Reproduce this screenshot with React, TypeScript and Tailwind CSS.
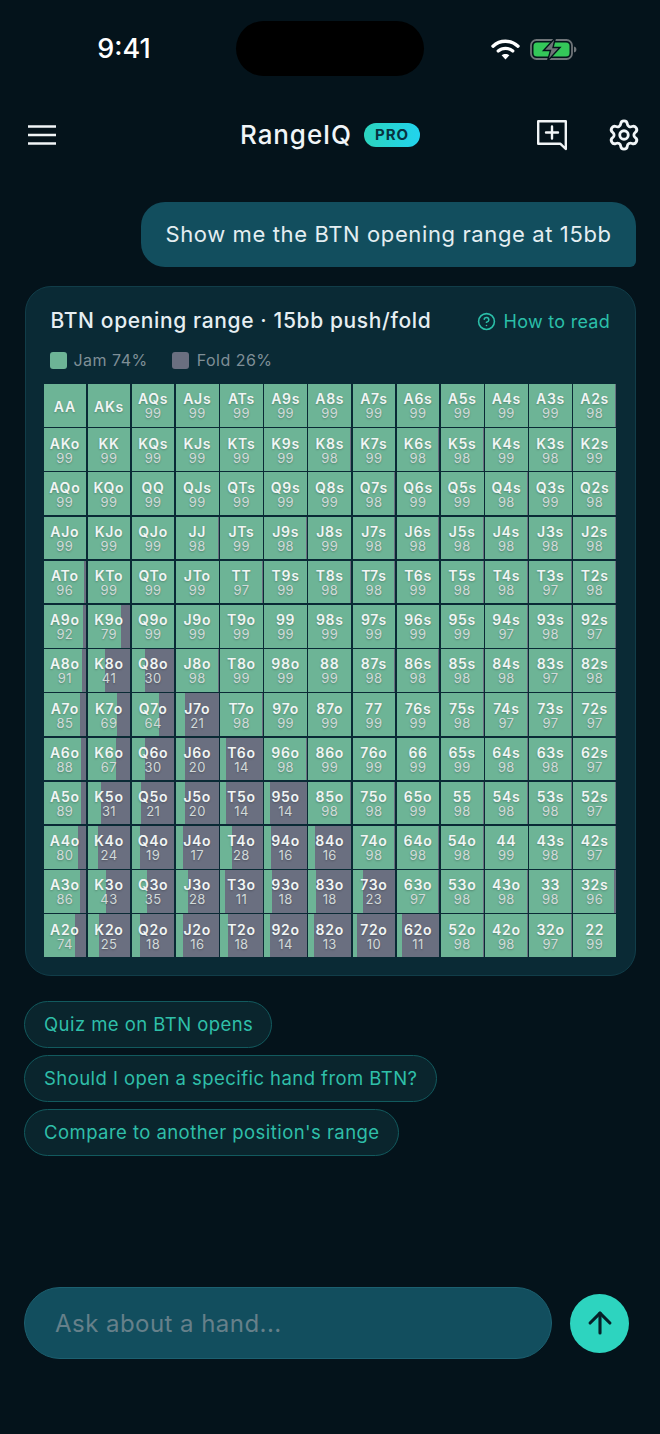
import { ArrowUp, CircleHelp, Settings } from "lucide-react";

type Hand = [string, number | null];

const rows: string[] = [
  "AA,AKs,AQs:99,AJs:99,ATs:99,A9s:99,A8s:99,A7s:99,A6s:99,A5s:99,A4s:99,A3s:99,A2s:98",
  "AKo:99,KK:99,KQs:99,KJs:99,KTs:99,K9s:99,K8s:98,K7s:99,K6s:98,K5s:98,K4s:99,K3s:98,K2s:99",
  "AQo:99,KQo:99,QQ:99,QJs:99,QTs:99,Q9s:99,Q8s:99,Q7s:98,Q6s:99,Q5s:99,Q4s:98,Q3s:99,Q2s:98",
  "AJo:99,KJo:99,QJo:99,JJ:98,JTs:99,J9s:98,J8s:99,J7s:98,J6s:98,J5s:98,J4s:98,J3s:98,J2s:98",
  "ATo:96,KTo:99,QTo:99,JTo:99,TT:97,T9s:99,T8s:98,T7s:98,T6s:99,T5s:98,T4s:98,T3s:97,T2s:98",
  "A9o:92,K9o:79,Q9o:99,J9o:99,T9o:99,99:99,98s:99,97s:99,96s:99,95s:99,94s:97,93s:98,92s:97",
  "A8o:91,K8o:41,Q8o:30,J8o:98,T8o:99,98o:99,88:99,87s:98,86s:98,85s:98,84s:98,83s:97,82s:98",
  "A7o:85,K7o:69,Q7o:64,J7o:21,T7o:98,97o:99,87o:99,77:99,76s:99,75s:98,74s:97,73s:97,72s:97",
  "A6o:88,K6o:67,Q6o:30,J6o:20,T6o:14,96o:98,86o:99,76o:99,66:99,65s:99,64s:98,63s:98,62s:97",
  "A5o:89,K5o:31,Q5o:21,J5o:20,T5o:14,95o:14,85o:98,75o:98,65o:99,55:98,54s:98,53s:98,52s:97",
  "A4o:80,K4o:24,Q4o:19,J4o:17,T4o:28,94o:16,84o:16,74o:98,64o:98,54o:98,44:99,43s:98,42s:97",
  "A3o:86,K3o:43,Q3o:35,J3o:28,T3o:11,93o:18,83o:18,73o:23,63o:97,53o:98,43o:98,33:98,32s:96",
  "A2o:74,K2o:25,Q2o:18,J2o:16,T2o:18,92o:14,82o:13,72o:10,62o:11,52o:98,42o:98,32o:97,22:99",
];

const hands: Hand[] = rows.flatMap((row) =>
  row.split(",").map((item): Hand => {
    const [name, value] = item.split(":");
    return [name, value ? Number(value) : null];
  }),
);

const chips = [
  "Quiz me on BTN opens",
  "Should I open a specific hand from BTN?",
  "Compare to another position's range",
];

function Wifi() {
  return (
    <svg width="29" height="22" viewBox="0 0 29 22" fill="none">
      <path d="M2 8.2C9 1.6 20 1.6 27 8.2" stroke="#fff" strokeWidth="3.4" strokeLinecap="round" />
      <path d="M7.2 13C11.3 9.4 17.7 9.4 21.8 13" stroke="#fff" strokeWidth="3.2" strokeLinecap="round" />
      <path d="M14.5 21.5L10.6 17.3C12.8 15.5 16.2 15.5 18.4 17.3Z" fill="#fff" />
    </svg>
  );
}

function Battery() {
  return (
    <svg width="47" height="24" viewBox="0 0 47 24" fill="none">
      <rect x="1" y="3" width="41" height="19" rx="5.5" stroke="#6f7478" strokeWidth="1.8" />
      <rect x="3.5" y="5.5" width="36" height="14" rx="3.5" fill="#34c759" />
      <path d="M44 9.5c1.6.4 2.4 1.5 2.4 3s-.8 2.6-2.4 3z" fill="#6f7478" />
      <path d="M25.5 0.5L13.5 13.5H20.5L17.5 24L30 10.5H23Z" fill="#6f7478" stroke="#04131b" strokeWidth="1.4" />
    </svg>
  );
}

function Hamburger() {
  return (
    <svg width="28" height="20" viewBox="0 0 28 20" fill="none" stroke="#f1f5f7" strokeWidth="2.6">
      <path d="M0 1.5H28M0 10H28M0 18.5H28" />
    </svg>
  );
}

function NewChat() {
  return (
    <svg width="32" height="32" viewBox="0 0 32 32" fill="none" stroke="#f1f5f7" strokeWidth="2.4">
      <path d="M2.2 2.2H29.8V30L24.5 24.8H2.2Z" strokeLinejoin="round" />
      <path d="M16 7.5V19.5M10 13.5H22" strokeLinecap="round" />
    </svg>
  );
}

function Cell({ name, value }: { name: string; value: number | null }) {
  const pct = value ?? 100;
  return (
    <div
      className="flex h-[42.7px] flex-col items-center justify-center pt-[2px] text-center [text-shadow:0_1px_2px_rgba(0,0,0,0.25)]"
      style={{ background: `linear-gradient(to right, #6db496 ${pct}%, #6a6f80 ${pct}%)` }}
    >
      <span className="text-[14px] leading-[15px] font-semibold tracking-[0.05em] text-[#f1f5f4]">{name}</span>
      {value !== null && (
        <span className="text-[13px] leading-[15px] tracking-[0.03em] text-[#d2dad9]">{value}</span>
      )}
    </div>
  );
}

export default function App() {
  return (
    <div className="flex h-[1434px] w-[660px] flex-col overflow-hidden bg-[#04131b] font-['Inter',sans-serif]">
      <div className="grid h-[76px] grid-cols-[236px_188px_236px] items-center pt-[21px]">
        <span className="pl-[12px] text-center text-[27px] leading-none font-medium text-white">9:41</span>
        <div className="h-[55px] rounded-[28px] bg-black" />
        <div className="flex items-center gap-[10px] pl-[67px]">
          <Wifi />
          <Battery />
        </div>
      </div>

      <header className="mt-[37px] flex h-[44px] items-center pr-[19px] pl-[28px]">
        <Hamburger />
        <div className="ml-[184px] flex items-center gap-[12px]">
          <span className="text-[26px] leading-none font-medium tracking-[0.035em] text-[#f1f5f7]">RangeIQ</span>
          <span className="flex h-[24px] w-[56px] items-center justify-center rounded-full bg-gradient-to-r from-[#2cd4bd] to-[#22d3ee] text-[15px] font-bold tracking-[0.06em] text-[#083240]">
            PRO
          </span>
        </div>
        <div className="ml-auto flex items-center gap-[39px]">
          <NewChat />
          <Settings size={34} strokeWidth={2} className="text-[#f1f5f7]" />
        </div>
      </header>

      <div className="mt-[45px] flex justify-end pr-[24px]">
        <div className="flex h-[65px] w-[495px] items-center justify-center rounded-[24px] rounded-br-[6px] bg-[#124e5e] text-[22px] tracking-[0.028em] text-[#e4eef2]">
          Show me the BTN opening range at 15bb
        </div>
      </div>

      <section className="mt-[19px] mr-[24px] ml-[25px] h-[690px] rounded-[26px] border border-[#113d49] bg-[#0a2a35] pt-[20px] pl-[17.5px]">
        <div className="flex items-center justify-between pr-[25px] pl-[7px]">
          <h2 className="text-[21px] leading-[28px] font-medium tracking-[0.03em] text-[#e6eef2]">
            BTN opening range · 15bb push/fold
          </h2>
          <div className="flex items-center gap-[8px] text-[18px] tracking-[0.015em] text-[#2bbfa9]">
            <CircleHelp size={19} strokeWidth={2} />
            How to read
          </div>
        </div>
        <div className="mt-[15px] flex items-center gap-[24px] pl-[6px] text-[16px] leading-[20px] tracking-[0.03em] text-[#7f8f97]">
          <div className="flex items-center gap-[7px]">
            <span className="h-[17px] w-[17px] rounded-[3px] bg-[#6db496]" />
            Jam 74%
          </div>
          <div className="flex items-center gap-[8px]">
            <span className="h-[17px] w-[17px] rounded-[3px] bg-[#6a6f80]" />
            Fold 26%
          </div>
        </div>
        <div className="mt-[14px] grid w-[572.5px] grid-cols-13 gap-[1.5px]">
          {hands.map(([name, value]) => (
            <Cell key={name} name={name} value={value} />
          ))}
        </div>
      </section>

      <div className="mt-[25px] flex flex-col items-start gap-[7px] pl-[24px]">
        {chips.map((chip) => (
          <button
            key={chip}
            className="flex h-[47px] items-center rounded-full border border-[#125a5e] bg-[#0a252d] pr-[18px] pl-[19px] text-[18.5px] tracking-[0.024em] text-[#2fbfa9]"
          >
            {chip}
          </button>
        ))}
      </div>

      <div className="mt-[131px] flex items-center pr-[31px] pl-[24px]">
        <div className="flex h-[72px] w-[528px] items-center rounded-full border border-[#1c6070] bg-[#124e5e] pt-[1px] pl-[30px] text-[24px] tracking-[0.019em] text-[#66808a]">
          Ask about a hand...
        </div>
        <button className="ml-auto flex h-[59px] w-[59px] items-center justify-center rounded-full bg-[#2dd4bf] text-[#062028]">
          <ArrowUp size={34} strokeWidth={2.2} />
        </button>
      </div>
    </div>
  );
}
